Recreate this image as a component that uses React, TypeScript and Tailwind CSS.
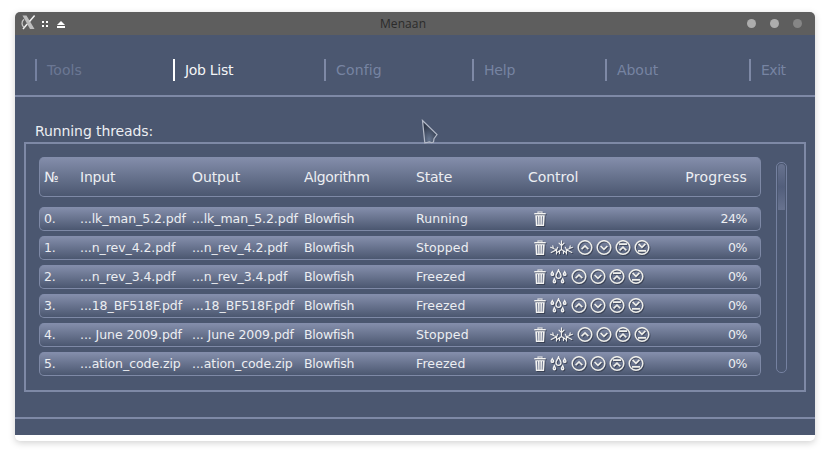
import React from "react";

const NAV = [
  { label: "Tools", width: "w-[138px]", tracking: "tracking-[0.1px]", active: false, dim: true },
  { label: "Job List", width: "w-[151px]", tracking: "tracking-[-0.3px]", active: true, dim: false },
  { label: "Config", width: "w-[148px]", tracking: "tracking-[0.15px]", active: false, dim: false },
  { label: "Help", width: "w-[133px]", tracking: "tracking-[-0.2px]", active: false, dim: false },
  { label: "About", width: "w-[144px]", tracking: "tracking-[-0.05px]", active: false, dim: false },
  { label: "Exit", width: "w-[60px]", tracking: "tracking-[-0.5px]", active: false, dim: false },
];

const JOBS = [
  { input: "...lk_man_5.2.pdf", state: "Running", progress: "24%" },
  { input: "...n_rev_4.2.pdf", state: "Stopped", progress: "0%" },
  { input: "...n_rev_3.4.pdf", state: "Freezed", progress: "0%" },
  { input: "...18_BF518F.pdf", state: "Freezed", progress: "0%" },
  { input: "... June 2009.pdf", state: "Stopped", progress: "0%" },
  { input: "...ation_code.zip", state: "Freezed", progress: "0%" },
];

const SHADOW = "drop-shadow-[1px_1px_0.5px_rgba(35,40,55,0.55)]";

function Trash() {
  return (
    <svg width="12" height="16" viewBox="0 0 12 16" className={SHADOW}>
      <path d="M4 1.8V1h4v.8" fill="none" stroke="#f4f4f2" strokeWidth="1.2" />
      <path d="M0.3 2h11.4v1.4H0.3z" fill="#f4f4f2" />
      <path d="M1.3 4.2h9.4L10.1 15H1.9z" fill="#f4f4f2" />
      <path d="M3.500 5.300l.3 8.400M6 5.300v8.400M8.500 5.300l-.3 8.400" stroke="#626b84" strokeWidth="0.9" />
    </svg>
  );
}

function Frost() {
  return (
    <svg width="23" height="16" viewBox="0 0 23 16" fill="none" stroke="#f0f0ee" strokeWidth="1.1" strokeLinecap="round" className={SHADOW}>
      <path d="M11.500.8v8.700M9 3.200l2.500 2.500L14 3.200" />
      <path d="M11.500 9.500L7.300 12.300M11.500 9.500l4.200 2.800M9.500 10.800v2.700M13.500 10.800v2.700" />
      <path d="M.6 7.300l5.900 2.500L1.200 12.500M6.500 9.800V14M6.500 9.800l1.200-2.500M2.800 5.800l.6 2.700" />
      <path d="M22.400 7.300l-5.900 2.500 5.300 2.700M16.500 9.800V14M16.500 9.800l-1.200-2.500M20.200 5.800l-.6 2.700" />
    </svg>
  );
}

function Drops() {
  return (
    <svg width="17" height="16" viewBox="0 0 17 16" fill="#f4f4f2" className={SHADOW}>
      <path d="M2.300 1.300C1.500 3.200.5 3.900.5 5.200a1.900 1.900 0 0 0 3.800 0c0-1.300-1.200-2-2-3.900z" />
      <path d="M14.700 1.300c-.8 1.900-1.900 2.600-1.900 3.900a1.900 1.900 0 0 0 3.800 0c0-1.300-1.100-2-1.900-3.900z" />
      <path d="M8.500.9C7.600 3.800 6 4.800 6 6.800a2.500 2.500 0 0 0 5 0C11 4.800 9.400 3.800 8.500.9z" fill="none" stroke="#f4f4f2" strokeWidth="1.300" />
      <path d="M4.300 8.300c-.8 2-1.700 3-1.700 4.400a1.800 1.800 0 0 0 3.600 0c0-1.400-1.100-2.400-1.900-4.400z" />
      <path d="M12.700 8.300c-.8 2-1.900 3-1.900 4.400a1.800 1.800 0 0 0 3.600 0c0-1.400-.9-2.400-1.700-4.400z" />
      <path d="M2.300 4.300v1.200M14.700 4.300v1.200M4.400 11.600v1.300M12.600 11.600v1.300" stroke="#7983a0" strokeWidth="0.9" />
    </svg>
  );
}

function Arrow({ d }: { d: string }) {
  return (
    <svg width="16" height="16" viewBox="0.3 0 16 16" fill="none" stroke="#eeeeea" strokeWidth="1.5" className={SHADOW}>
      <circle cx="8.300" cy="7.500" r="6.800" />
      <path d={d} strokeWidth="1.7" />
    </svg>
  );
}

function Controls({ state }: { state: string }) {
  return (
    <div className="flex h-4 items-center pl-[6px]">
      <Trash />
      {state !== "Running" && (
        <>
          <div className="ml-1 flex">{state === "Stopped" ? <Frost /> : <Drops />}</div>
          <div className="ml-1 flex gap-[3px]">
            <Arrow d="M4.900 9.200l3.400-3.300 3.400 3.300" />
            <Arrow d="M4.900 6l3.400 3.300L11.700 6" />
            <Arrow d="M4.200 4.200h8.200M4.900 10.400l3.400-3.300 3.400 3.300" />
            <Arrow d="M4.900 3.900l3.400 3.400 3.400-3.400M4.300 10.800h8" />
          </div>
        </>
      )}
    </div>
  );
}

const GRID =
  "grid grid-cols-[36px_112px_112px_112px_112px_1fr_70px] items-center rounded-[5px] border border-t-[#838dab] border-[#7e89a6] bg-linear-to-b/srgb from-[#838daa] to-[#4b5770] pl-1 pr-[13px] whitespace-nowrap";

export default function App() {
  return (
    <div className="h-[459px] w-[830px] overflow-hidden bg-white px-[15px] pt-3 font-['DejaVu_Sans',sans-serif] text-[#eceef2]">
      <div className="relative h-[429px] w-[800px] overflow-visible rounded-[5px] bg-white shadow-[0_2px_7px_rgba(0,0,0,0.18)]">
        <header className="flex h-[23px] items-center rounded-t-[5px] bg-[#5e5e5e]">
          <div className="flex w-[352px] items-center pl-[6px]">
            <svg width="15" height="15" viewBox="0 0 15 15" className="-mt-[3px]">
              <path d="M1.500.5h4L13.500 14H9z" fill="#bdbdbd" />
              <path d="M13.600.5L8.500 6.600M6.200 9L2 14" stroke="#f2f2f2" strokeWidth="1.500" />
              <path d="M3 4.200C.2 6.500.4 11 3.300 12.300" fill="none" stroke="#c5c5c5" strokeWidth="1.300" />
            </svg>
            <svg width="6" height="6" viewBox="0 0 6 6" className="ml-[6px] mt-px" fill="#fff">
              <path d="M0 0h2v2H0zM4 0h2v2H4zM0 4h2v2H0zM4 4h2v2H4z" />
            </svg>
            <svg width="8" height="7" viewBox="0 0 8 7" className="ml-[9px] mt-[2px]" fill="#fff">
              <path d="M4 0l4 4H0zM0 5h8v2H0z" />
            </svg>
          </div>
          <div className="w-[72px] text-center font-['Open_Sans',sans-serif] text-[12px] leading-[22px] tracking-[0.1px] text-[#2b2b2b]">Menaan</div>
          <div className="ml-auto flex gap-[14px] pr-[13px]">
            <span className="size-[9px] rounded-full bg-[#adadad]" />
            <span className="size-[9px] rounded-full bg-[#adadad]" />
            <span className="size-[9px] rounded-full bg-[#868686]" />
          </div>
        </header>

        <main className="h-[400px] bg-[#4b5770]">
          <nav className="flex h-[62px] items-start border-b-2 border-[#7e89a6] pl-5 pt-6 text-[14px]">
            {NAV.map((n) => (
              <div key={n.label} className={`${n.width} shrink-0`}>
                <div
                  className={`h-[22px] border-l-2 pl-[10px] leading-[22px] ${n.tracking} ${
                    n.active
                      ? "border-white text-[#f4f5f7]"
                      : n.dim
                        ? "border-[#7581a0] text-[#6b7794]"
                        : "border-[#7e89a6] text-[#7784a2]"
                  }`}
                >
                  {n.label}
                </div>
              </div>
            ))}
          </nav>

          <div className="h-[45px] pl-5 pt-[24px] text-[14px] leading-[20px] tracking-[-0.1px]">Running threads:</div>

          <section className="ml-[9px] flex h-[250px] w-[782px] border-2 border-[#7e89a6] pl-[13px] pt-[13px]">
            <div className="w-[722px]">
              <div className={`${GRID} h-10 text-[14px]`}>
                <span className="tracking-[-0.5px]">№</span>
                <span className="tracking-[-0.2px]">Input</span>
                <span className="tracking-[-0.1px]">Output</span>
                <span className="tracking-[-0.35px]">Algorithm</span>
                <span className="tracking-[-0.2px]">State</span>
                <span className="tracking-[-0.05px]">Control</span>
                <span className="text-right tracking-[0.25px]">Progress</span>
              </div>
              <div className="mt-[10px] flex flex-col gap-[5px] text-[12.500px]">
                {JOBS.map((job, i) => (
                  <div key={job.input} className={`${GRID} h-6`}>
                    <span className="tracking-[-0.2px]">{i}.</span>
                    <span className="tracking-[-0.07px]">{job.input}</span>
                    <span className="tracking-[-0.07px]">{job.input}</span>
                    <span className="tracking-[-0.25px]">Blowfish</span>
                    <span className="tracking-[0.1px]">{job.state}</span>
                    <Controls state={job.state} />
                    <span className="text-right tracking-[-0.4px]">{job.progress}</span>
                  </div>
                ))}
              </div>
            </div>
            <div className="ml-[15px] mt-[5px] h-[211px] w-[11px] rounded-[5px] border border-[#7581a0] p-px">
              <div className="h-[46px] rounded-t-[4px] rounded-b-[1px] bg-linear-to-b/srgb from-[#68738f] via-[#525e7b] to-[#68738f]" />
            </div>
          </section>

          <div className="mt-[25px] h-[2px] bg-[#7e89a6]" />
        </main>

        <svg width="18" height="26" viewBox="0 0 18 26" className="absolute left-[406px] top-[107px]">
          <defs>
            <radialGradient id="pointer" cx="0.45" cy="0.85" r="0.65">
              <stop offset="0" stopColor="#66758f" />
              <stop offset="1" stopColor="#2f384a" />
            </radialGradient>
          </defs>
          <path d="M1.500 1.500L16 15.500l-3 4.200-.5 3.300-2 .7-2-.8-2 .4-2.700.4z" fill="url(#pointer)" stroke="#b4bac8" strokeWidth="1.200" />
        </svg>
      </div>
    </div>
  );
}
